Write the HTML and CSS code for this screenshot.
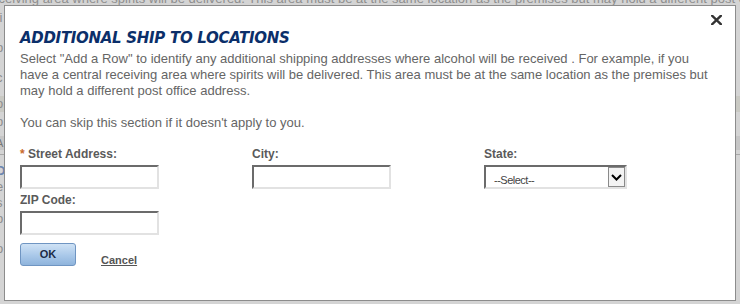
FILE: index.html
```html
<!DOCTYPE html>
<html>
<head>
<meta charset="utf-8">
<link rel="stylesheet" href="styles.css">
</head>
<body>
<div class="page">
  <p class="bg-line">receiving area where spirits will be delivered. This area must be at the same location as the premises but may hold a different post office address.</p>
  <p class="bg-text bg-fi">fi</p>
  <p class="bg-text bg-p">p</p>
  <p class="bg-text bg-c">c</p>
  <div class="bg-band"><span class="bg-text">o</span></div>
  <p class="bg-text bg-o">p</p>
  <div class="bg-head"><span class="bg-text">A</span></div>
  <div class="bg-rule"></div>
  <p class="bg-text bg-link">D</p>
  <p class="bg-text">e</p>
  <p class="bg-text">s</p>
  <p class="bg-text">p</p>
  <p class="bg-text bg-last">o</p>
</div>

<div class="modal">
  <button class="close" type="button" aria-label="Close">
    <svg width="11" height="10" viewBox="0 0 11 10"><path d="M1.2 0.8 L9.8 9.2 M9.8 0.8 L1.2 9.2" stroke="#333" stroke-width="2.4" stroke-linecap="square" fill="none"/></svg>
  </button>
  <h2 class="title">ADDITIONAL SHIP TO LOCATIONS</h2>
  <p class="intro">Select "Add a Row" to identify any additional shipping addresses where alcohol will be received . For example, if you have a central receiving area where spirits will be delivered. This area must be at the same location as the premises but may hold a different post office address.<br><br>You can skip this section if it doesn't apply to you.</p>

  <div class="fields">
    <div class="field">
      <label class="label"><span class="req">*</span> Street Address:</label>
      <input class="input" type="text">
    </div>
    <div class="field">
      <label class="label">City:</label>
      <input class="input" type="text">
    </div>
    <div class="field">
      <label class="label">State:</label>
      <div class="select-wrap">
        <select class="select"><option>--Select--</option></select>
        <span class="select-btn">
          <svg width="11" height="7" viewBox="0 0 11 7"><path d="M1 1 L5.5 5.5 L10 1" stroke="#000" stroke-width="2" fill="none"/></svg>
        </span>
      </div>
    </div>
    <div class="field">
      <label class="label">ZIP Code:</label>
      <input class="input" type="text">
    </div>
  </div>

  <div class="actions">
    <button class="ok" type="button">OK</button>
    <a class="cancel" href="#">Cancel</a>
  </div>
</div>
</body>
</html>
```

FILE: styles.css
```css
html, body {
  margin: 0;
  padding: 0;
}
body {
  width: 740px;
  height: 304px;
  overflow: hidden;
  background: #d4d4d4;
  font-family: "Liberation Sans", Arial, sans-serif;
  position: relative;
}

/* dimmed page behind the dialog */
.page {
  color: #8e8e8e;
  font-size: 13px;
  line-height: 16px;
}
.page p { margin: 0; }
.bg-line {
  margin-top: -9px !important;
  margin-left: -13px !important;
  white-space: nowrap;
  height: 16px;
  overflow: hidden;
}
.bg-text {
  display: block;
  margin-left: -4px !important;
  height: 16px;
}
.bg-fi { margin-top: 3px !important; }
.bg-p { margin-top: 14px !important; }
.bg-c { margin-top: 14px !important; }
.bg-band {
  margin-top: 10px;
  height: 16px;
  background: #c9c9c3;
}
.bg-o { margin-top: 2px !important; }
.bg-head {
  margin-top: 6px;
  height: 14px;
  background: #c6c6c6;
  font-size: 11px;
  line-height: 14px;
  color: #777;
}
.bg-rule {
  margin-top: 4px;
  height: 1px;
  background: #a8a8a8;
}
.bg-link {
  margin-top: 8px !important;
  color: #6c86b0;
  font-weight: bold;
}
.bg-last { margin-top: 14px !important; }

/* dialog */
.modal {
  position: absolute;
  left: 4px;
  top: 5px;
  width: 730px;
  height: 294px;
  box-sizing: content-box;
  border: 1px solid #8c8c8c;
  background: #fff;
  padding: 0;
}
.close {
  position: absolute;
  top: 9px;
  right: 13px;
  border: 0;
  padding: 0;
  margin: 0;
  background: none;
  width: 11px;
  height: 10px;
  display: flex;
}
.title {
  margin: 23px 0 0 15px;
  font-family: "DejaVu Sans", Verdana, sans-serif;
  font-size: 15px;
  line-height: 18px;
  font-weight: bold;
  font-style: italic;
  color: #0b2f6a;
  letter-spacing: -0.3px;
}
.intro {
  margin: 4px 15px 0 15px;
  font-size: 13px;
  line-height: 16px;
  color: #656565;
}
.fields {
  margin: 16px 0 0 15px;
  display: grid;
  grid-template-columns: 232px 232px 232px;
  row-gap: 4px;
}
.field {
  display: flex;
  flex-direction: column;
  align-items: flex-start;
}
.label {
  font-size: 12px;
  line-height: 15px;
  font-weight: bold;
  color: #5a5a5a;
  margin-bottom: 3px;
}
.req { color: #c8692c; }
.input {
  box-sizing: border-box;
  width: 139px;
  height: 24px;
  margin: 0;
  padding: 0 3px;
  border-style: solid;
  border-width: 2px;
  border-color: #6b6b6b #e2e2e2 #e2e2e2 #6b6b6b;
  background: #fff;
  font-family: "Liberation Sans", Arial, sans-serif;
  font-size: 12px;
}
.select-wrap {
  position: relative;
  width: 143px;
  height: 24px;
}
.select {
  box-sizing: border-box;
  width: 143px;
  height: 24px;
  margin: 0;
  padding: 6px 0 0 8px;
  appearance: none;
  -webkit-appearance: none;
  border-style: solid;
  border-width: 2px;
  border-color: #6b6b6b #e2e2e2 #e2e2e2 #6b6b6b;
  border-radius: 0;
  background: #fff;
  font-family: "Liberation Sans", Arial, sans-serif;
  font-size: 11px;
  letter-spacing: -0.5px;
  color: #444;
}
.select-btn {
  position: absolute;
  top: 2px;
  right: 2px;
  width: 17px;
  height: 20px;
  box-sizing: border-box;
  border: 1px solid #8a8a8a;
  background: #f3f3f3;
  display: flex;
  align-items: center;
  justify-content: center;
}
.actions {
  margin: 8px 0 0 15px;
  display: flex;
  align-items: flex-start;
}
.ok {
  box-sizing: border-box;
  width: 56px;
  height: 23px;
  margin: 0;
  padding: 0 0 1px;
  border: 1px solid #6f95c2;
  border-radius: 3px;
  background: linear-gradient(#cfe2f5, #a9c8e9 55%, #8fb4dc);
  font-family: "Liberation Sans", Arial, sans-serif;
  font-size: 11px;
  font-weight: bold;
  color: #1b2b45;
}
.cancel {
  margin: 11px 0 0 25px;
  font-size: 11px;
  line-height: 13px;
  font-weight: bold;
  color: #555;
  text-decoration: underline;
}
```
